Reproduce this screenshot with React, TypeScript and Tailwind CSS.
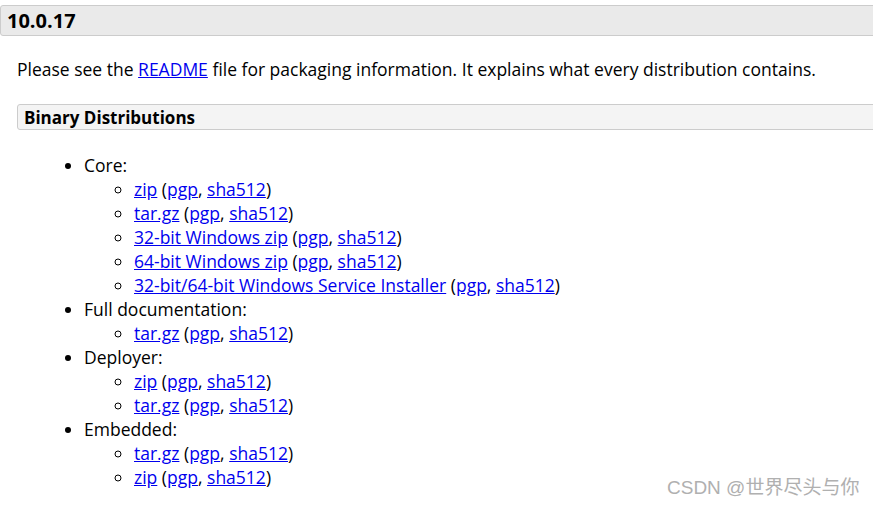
import React from "react";

type Sub = { label: string };
type Group = { title: string; items: Sub[] };

const groups: Group[] = [
  {
    title: "Core:",
    items: [
      { label: "zip" },
      { label: "tar.gz" },
      { label: "32-bit Windows zip" },
      { label: "64-bit Windows zip" },
      { label: "32-bit/64-bit Windows Service Installer" },
    ],
  },
  { title: "Full documentation:", items: [{ label: "tar.gz" }] },
  { title: "Deployer:", items: [{ label: "zip" }, { label: "tar.gz" }] },
  { title: "Embedded:", items: [{ label: "tar.gz" }, { label: "zip" }] },
];

function A({ children }: { children: React.ReactNode }) {
  return <a href="#" className="text-[#0000ee] underline">{children}</a>;
}

export default function App() {
  return (
    <div className="relative w-[873px] h-[508px] overflow-hidden bg-white text-black font-['Open_Sans',sans-serif] text-[17.5px] leading-[24px]">
      <div className="mt-[5px] ml-0 -mr-2 h-[31px] rounded-l-[3px] border border-[#cccccc] bg-[#eaeaea] pl-[6px] flex items-center">
        <h3 className="text-[20px] font-bold leading-none">10.0.17</h3>
      </div>

      <div className="pl-[17px]">
        <p className="mt-[21px]">
          Please see the <A>README</A> file for packaging information. It explains what every distribution contains.
        </p>

        <div className="mt-[23px] -mr-2 h-[26px] rounded-l-[3px] border border-[#cccccc] bg-[#f4f4f4] pl-[6px] flex items-center">
          <h3 className="text-[17px] font-bold leading-none">Binary Distributions</h3>
        </div>

        <ul className="mt-[23px] pl-[67px] list-disc">
          {groups.map((g) => (
            <li key={g.title}>
              {g.title}
              <ul className="pl-[50px] list-[circle]">
                {g.items.map((it, i) => (
                  <li key={i}>
                    <A>{it.label}</A> (<A>pgp</A>, <A>sha512</A>)
                  </li>
                ))}
              </ul>
            </li>
          ))}
        </ul>
      </div>

      <div className="absolute left-[667px] top-[476px] text-[19px] leading-[24px] text-[#b0b0b0] font-['Liberation_Sans','Noto_Sans_CJK_SC',sans-serif]">
        CSDN @世界尽头与你
      </div>
    </div>
  );
}
